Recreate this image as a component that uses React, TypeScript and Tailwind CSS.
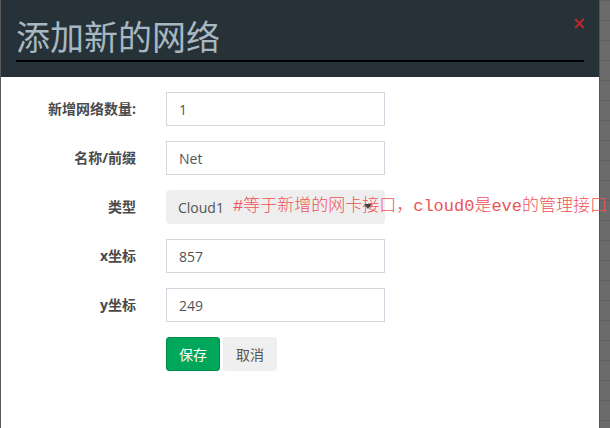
import React from "react";

const sans = "font-['Open_Sans','Noto_Sans_CJK_SC',sans-serif]";

function Row({ label, children }: { label: string; children: React.ReactNode }) {
  return (
    <div className="flex items-center h-[34px]">
      <div className="w-[135px] text-right text-[14px] font-bold text-[#4a4a4a] leading-none">{label}</div>
      <div className="ml-[30px] w-[219px] h-[34px] relative">{children}</div>
    </div>
  );
}

function Input({ value }: { value: string }) {
  return (
    <div className="w-full h-full border border-[#d2d6de] bg-white flex items-center pl-[12px] text-[14px] text-[#555]">
      {value}
    </div>
  );
}

export default function App() {
  return (
    <div className={`w-[610px] h-[428px] flex overflow-hidden ${sans}`}>
      <div className="w-[599px] h-full flex flex-col bg-white border-l border-[#5a5a5a] relative">
        <div className="h-[77px] bg-[#263238] px-[15px] pt-[14px] relative">
          <div className="text-[34px] leading-[44px] text-[#a7b8c2] font-['Noto_Sans_CJK_SC',sans-serif]">添加新的网络</div>
          <div className="mt-[2px] h-[2px] bg-black w-[568px]"></div>
          <div className="absolute left-[571px] top-[15px] text-[17px] font-bold leading-none text-[#b3272d] font-['DejaVu_Sans',sans-serif]">×</div>
        </div>
        <div className="flex flex-col gap-[15px] pt-[15px]">
          <Row label="新增网络数量:">
            <Input value="1" />
          </Row>
          <Row label="名称/前缀">
            <Input value="Net" />
          </Row>
          <Row label="类型">
            <div className="w-full h-full bg-[#eeeeee] rounded-[4px] flex items-center pl-[12px] text-[14px] text-[#555]">
              Cloud1
            </div>
            <span className="absolute left-[67px] top-[6px] whitespace-nowrap text-[17px] leading-[22px] font-light text-[#ee5358] font-['Liberation_Mono','Noto_Sans_CJK_SC',monospace]">
              #等于新增的网卡接口，cloud0是eve的管理接口
            </span>
            <svg className="absolute left-[198px] top-[14px]" width="8" height="5" viewBox="0 0 8 5">
              <path d="M0 0 L8 0 L4 5 Z" fill="#444" />
            </svg>
          </Row>
          <Row label="x坐标">
            <Input value="857" />
          </Row>
          <Row label="y坐标">
            <Input value="249" />
          </Row>
          <div className="flex items-center h-[34px] pl-[165px] gap-[3px]">
            <div className="w-[54px] h-[34px] rounded-[3px] bg-[#00a65a] border border-[#008d4c] text-white text-[14px] flex items-center justify-center">保存</div>
            <div className="w-[54px] h-[34px] rounded-[3px] bg-[#efefef] text-[#555] text-[14px] flex items-center justify-center">取消</div>
          </div>
        </div>
      </div>
      <div className="flex-1 h-full bg-[#6b6b6b] border-l border-[#555] bg-[linear-gradient(#5f5f5f_1px,transparent_1px)] bg-[length:100%_20px]"></div>
    </div>
  );
}
